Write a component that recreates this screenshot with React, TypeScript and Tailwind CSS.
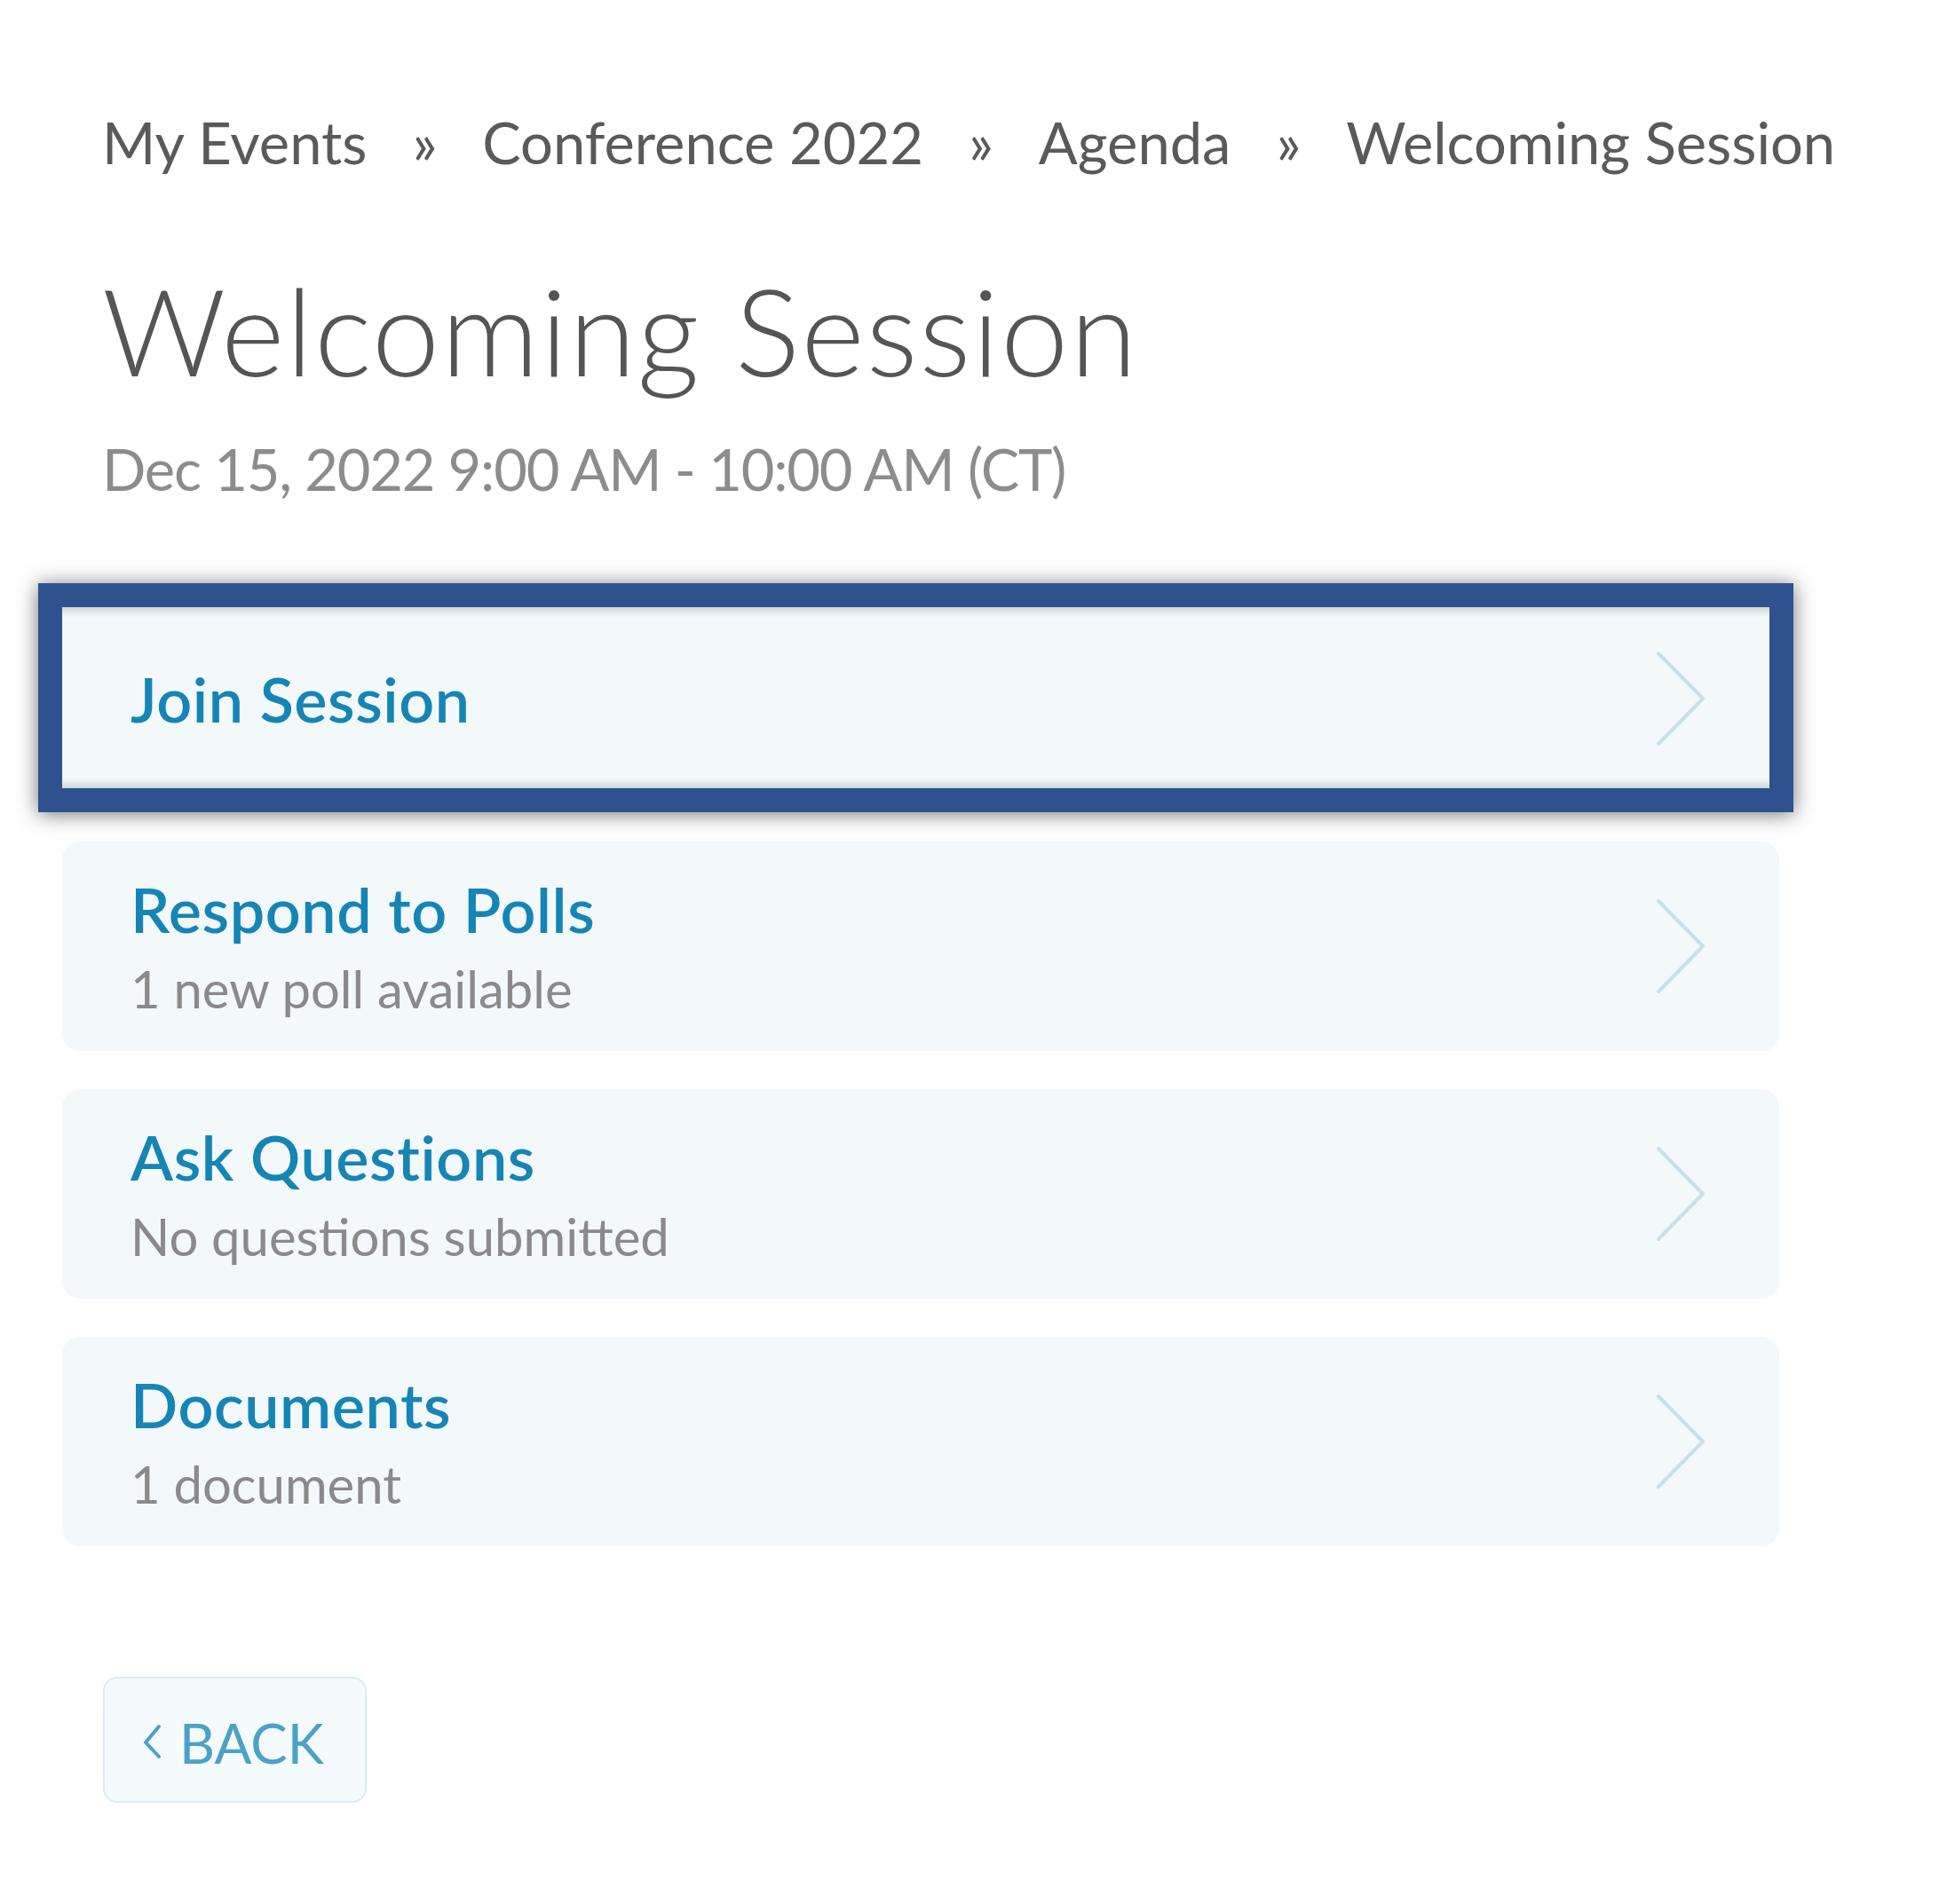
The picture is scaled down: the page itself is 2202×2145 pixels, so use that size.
import React from "react";

const font = { fontFamily: "Lato, 'Noto Sans', sans-serif" };

function Chevron() {
  return (
    <svg width="56" height="108" viewBox="0 0 56 108" className="shrink-0" aria-hidden="true">
      <polyline points="3,3 53,54 3,105" fill="none" stroke="#c6e1ec" strokeWidth="4" strokeLinecap="round" strokeLinejoin="round" />
    </svg>
  );
}

function Card({ title, subtitle }: { title: string; subtitle?: string }) {
  return (
    <div className="flex h-[236px] w-[1934px] items-center justify-between rounded-[20px] bg-[#f3f8fb] pl-[77px] pr-[83px]">
      <div className="flex flex-col">
        <div className="text-[70px] font-semibold leading-none tracking-[0.6px] text-[#1585b5]">{title}</div>
        {subtitle && <div className="mt-[26px] text-[58px] leading-none text-[#8a8a8a]">{subtitle}</div>}
      </div>
      <Chevron />
    </div>
  );
}

export default function App() {
  const crumbs = ["My Events", "Conference 2022", "Agenda", "Welcoming Session"];
  return (
    <div className="min-h-screen w-full bg-white pl-[70px] pt-[128px]" style={font}>
      <div className="pl-[45px]">
        <nav className="flex items-center gap-[51px] text-[65px] leading-none text-[#5a5a5a]">
          {crumbs.map((c, i) => (
            <React.Fragment key={c}>
              {i > 0 && <span>»</span>}
              <span>{c}</span>
            </React.Fragment>
          ))}
        </nav>
        <h1 className="mt-[110px] text-[137px] font-light leading-none tracking-[1.6px] text-[#555555]">Welcoming Session</h1>
        <div className="mt-[56px] text-[65px] leading-none tracking-[-1.2px] text-[#8c8c8c]">Dec 15, 2022 9:00 AM - 10:00 AM (CT)</div>
      </div>

      <div className="mt-[108px] flex flex-col items-start gap-[43px]">
        <div className="relative">
          <Card title="Join Session" />
          <div className="pointer-events-none absolute -bottom-[10px] -left-[27px] -right-[16px] -top-[12px] border-[27px] border-[#2f528f] shadow-[0_2px_22px_rgba(0,0,0,0.55),inset_0_12px_10px_-8px_rgba(0,0,0,0.18),inset_0_-12px_10px_-8px_rgba(0,0,0,0.18)]" />
        </div>
        <Card title="Respond to Polls" subtitle="1 new poll available" />
        <Card title="Ask Questions" subtitle="No questions submitted" />
        <Card title="Documents" subtitle="1 document" />
      </div>

      <button className="ml-[46px] mt-[147px] flex h-[142px] w-[297px] items-end gap-[20px] rounded-[16px] border-2 border-[#d8ebf3] bg-[#f5fafc] pb-[48px] pl-[42px] text-[62px] leading-none text-[#4aa2c6]">
        <svg width="22" height="44" viewBox="0 0 22 44" className="mb-[-2px]" aria-hidden="true">
          <polyline points="19,6 4,24 19,40" fill="none" stroke="#4aa2c6" strokeWidth="4" strokeLinecap="round" strokeLinejoin="round" />
        </svg>
        <span className="mb-[-13px]">BACK</span>
      </button>
    </div>
  );
}
